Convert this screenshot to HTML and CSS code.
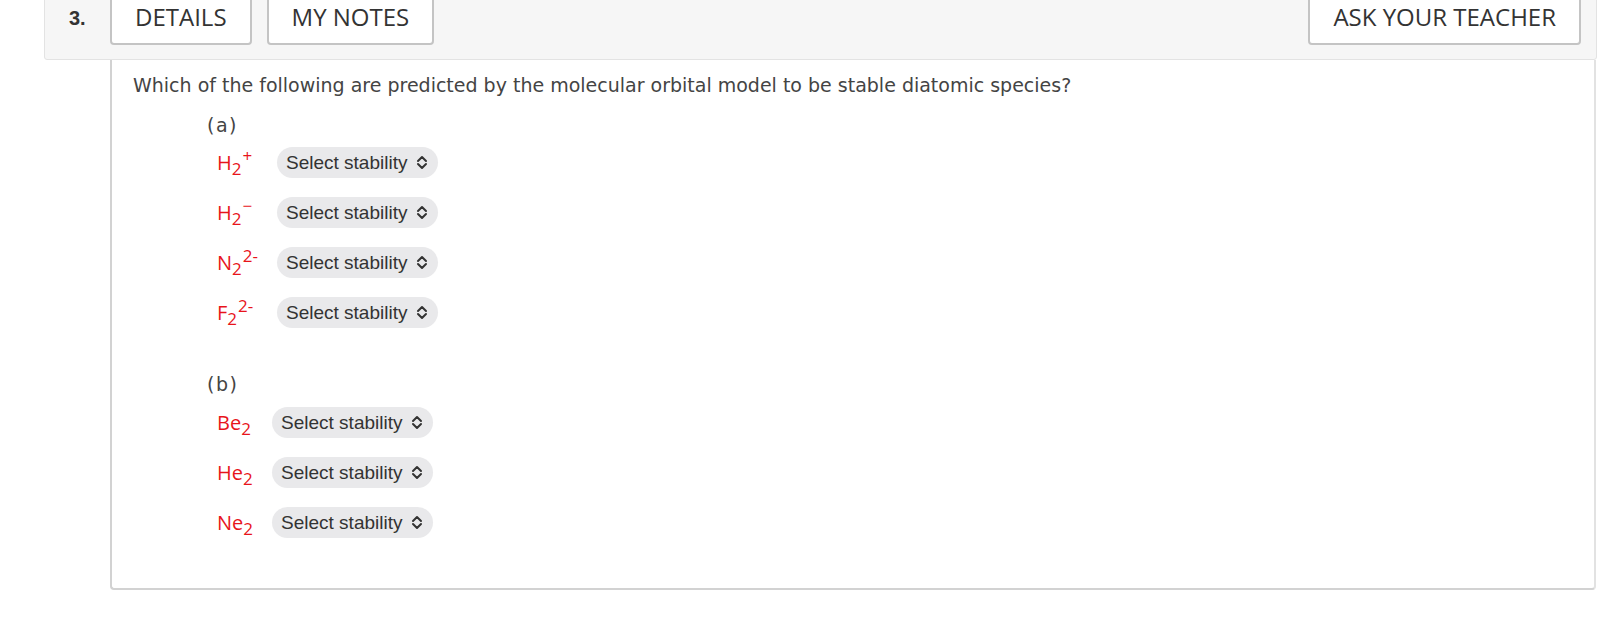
FILE: index.html
```html
<!DOCTYPE html>
<html>
<head>
<meta charset="utf-8">
<link rel="stylesheet" href="styles.css">
</head>
<body>
<div class="question">
  <div class="qhead">
    <span class="qnum">3.</span>
    <button class="tab">DETAILS</button>
    <button class="tab">MY NOTES</button>
    <span class="spacer"></span>
    <button class="tab">ASK YOUR TEACHER</button>
  </div>
  <div class="qbody">
    <p class="prompt">Which of the following are predicted by the molecular orbital model to be stable diatomic species?</p>
    <div class="part">
      <div class="plabel">(a)</div>
      <div class="rows">
        <span class="formula">H<sub>2</sub><sup>+</sup></span>
        <span class="sel">Select stability<svg class="chev" viewBox="0 0 12 15" width="12" height="15"><path d="M2 6 L6 2 L10 6 M2 9 L6 13 L10 9" fill="none" stroke="#333" stroke-width="2" stroke-linecap="round" stroke-linejoin="round"/></svg></span>
        <span class="formula">H<sub>2</sub><sup>&minus;</sup></span>
        <span class="sel">Select stability<svg class="chev" viewBox="0 0 12 15" width="12" height="15"><path d="M2 6 L6 2 L10 6 M2 9 L6 13 L10 9" fill="none" stroke="#333" stroke-width="2" stroke-linecap="round" stroke-linejoin="round"/></svg></span>
        <span class="formula">N<sub>2</sub><sup>2-</sup></span>
        <span class="sel">Select stability<svg class="chev" viewBox="0 0 12 15" width="12" height="15"><path d="M2 6 L6 2 L10 6 M2 9 L6 13 L10 9" fill="none" stroke="#333" stroke-width="2" stroke-linecap="round" stroke-linejoin="round"/></svg></span>
        <span class="formula">F<sub>2</sub><sup>2-</sup></span>
        <span class="sel">Select stability<svg class="chev" viewBox="0 0 12 15" width="12" height="15"><path d="M2 6 L6 2 L10 6 M2 9 L6 13 L10 9" fill="none" stroke="#333" stroke-width="2" stroke-linecap="round" stroke-linejoin="round"/></svg></span>
      </div>
    </div>
    <div class="part partb">
      <div class="plabel">(b)</div>
      <div class="rows">
        <span class="formula">Be<sub>2</sub></span>
        <span class="sel">Select stability<svg class="chev" viewBox="0 0 12 15" width="12" height="15"><path d="M2 6 L6 2 L10 6 M2 9 L6 13 L10 9" fill="none" stroke="#333" stroke-width="2" stroke-linecap="round" stroke-linejoin="round"/></svg></span>
        <span class="formula">He<sub>2</sub></span>
        <span class="sel">Select stability<svg class="chev" viewBox="0 0 12 15" width="12" height="15"><path d="M2 6 L6 2 L10 6 M2 9 L6 13 L10 9" fill="none" stroke="#333" stroke-width="2" stroke-linecap="round" stroke-linejoin="round"/></svg></span>
        <span class="formula">Ne<sub>2</sub></span>
        <span class="sel">Select stability<svg class="chev" viewBox="0 0 12 15" width="12" height="15"><path d="M2 6 L6 2 L10 6 M2 9 L6 13 L10 9" fill="none" stroke="#333" stroke-width="2" stroke-linecap="round" stroke-linejoin="round"/></svg></span>
      </div>
    </div>
  </div>
</div>
</body>
</html>
```
FILE: styles.css
```css
html, body {
  margin: 0;
  padding: 0;
  background: #fff;
}
.question {
  margin: -10px 0 0 44px;
  width: 1553px;
}
.qhead {
  height: 70px;
  box-sizing: border-box;
  background: #f6f6f6;
  border: 1px solid #e3e3e3;
  border-radius: 3px;
  display: flex;
  align-items: flex-start;
  padding: 4px 15px 0 24px;
}
.qnum {
  font-family: "Liberation Sans", Arial, sans-serif;
  font-weight: bold;
  font-size: 20px;
  color: #333;
  margin-top: 12px;
  width: 41px;
}
.tab {
  height: 50px;
  box-sizing: border-box;
  background: #fff;
  border: 2px solid #c4c4c4;
  border-radius: 4px;
  font-family: "Open Sans", sans-serif;
  font-size: 24px;
  color: #333;
  padding: 0 23px 6px;
  margin-right: 15px;
  line-height: 30px;
}
.spacer { flex: 1; }
.qhead .tab:last-child { margin-right: 0; }
.qbody {
  margin-left: 66px;
  width: 1486px;
  box-sizing: border-box;
  height: 530px;
  border-left: 2px solid #d2d2d2;
  border-right: 2px solid #e2e2e2;
  border-bottom: 2px solid #d2d2d2;
  border-radius: 0 0 4px 4px;
  padding: 12px 0 0 21px;
}
.prompt {
  margin: 0;
  font-family: "DejaVu Sans", Verdana, sans-serif;
  font-size: 19px;
  line-height: 26px;
  color: #444;
}
.part {
  margin: 14px 0 0 74px;
}
.partb { margin-top: 43px; }
.plabel {
  font-family: "DejaVu Sans", Verdana, sans-serif;
  font-size: 19px;
  line-height: 26px;
  color: #444;
  letter-spacing: 1.5px;
}
.rows {
  display: grid;
  grid-template-columns: auto auto;
  justify-content: start;
  column-gap: 19px;
  row-gap: 19px;
  margin: 9px 0 0 10px;
  align-items: center;
}
.partb .rows { margin-top: 10px; }
.formula {
  font-family: "Open Sans", sans-serif;
  font-size: 20px;
  color: #e8141b;
  line-height: 24px;
}
.formula sub, .formula sup {
  font-size: 17px;
  line-height: 0;
}
.formula sup { margin-left: 1px; }
.sel {
  display: inline-flex;
  align-items: center;
  height: 31px;
  box-sizing: border-box;
  background: #e9e9eb;
  border-radius: 16px;
  padding: 0 10px 0 9px;
  font-family: "Liberation Sans", Arial, sans-serif;
  font-size: 19px;
  color: #333;
  white-space: pre;
  width: 161px;
}
.chev {
  margin-left: auto;
}
```
